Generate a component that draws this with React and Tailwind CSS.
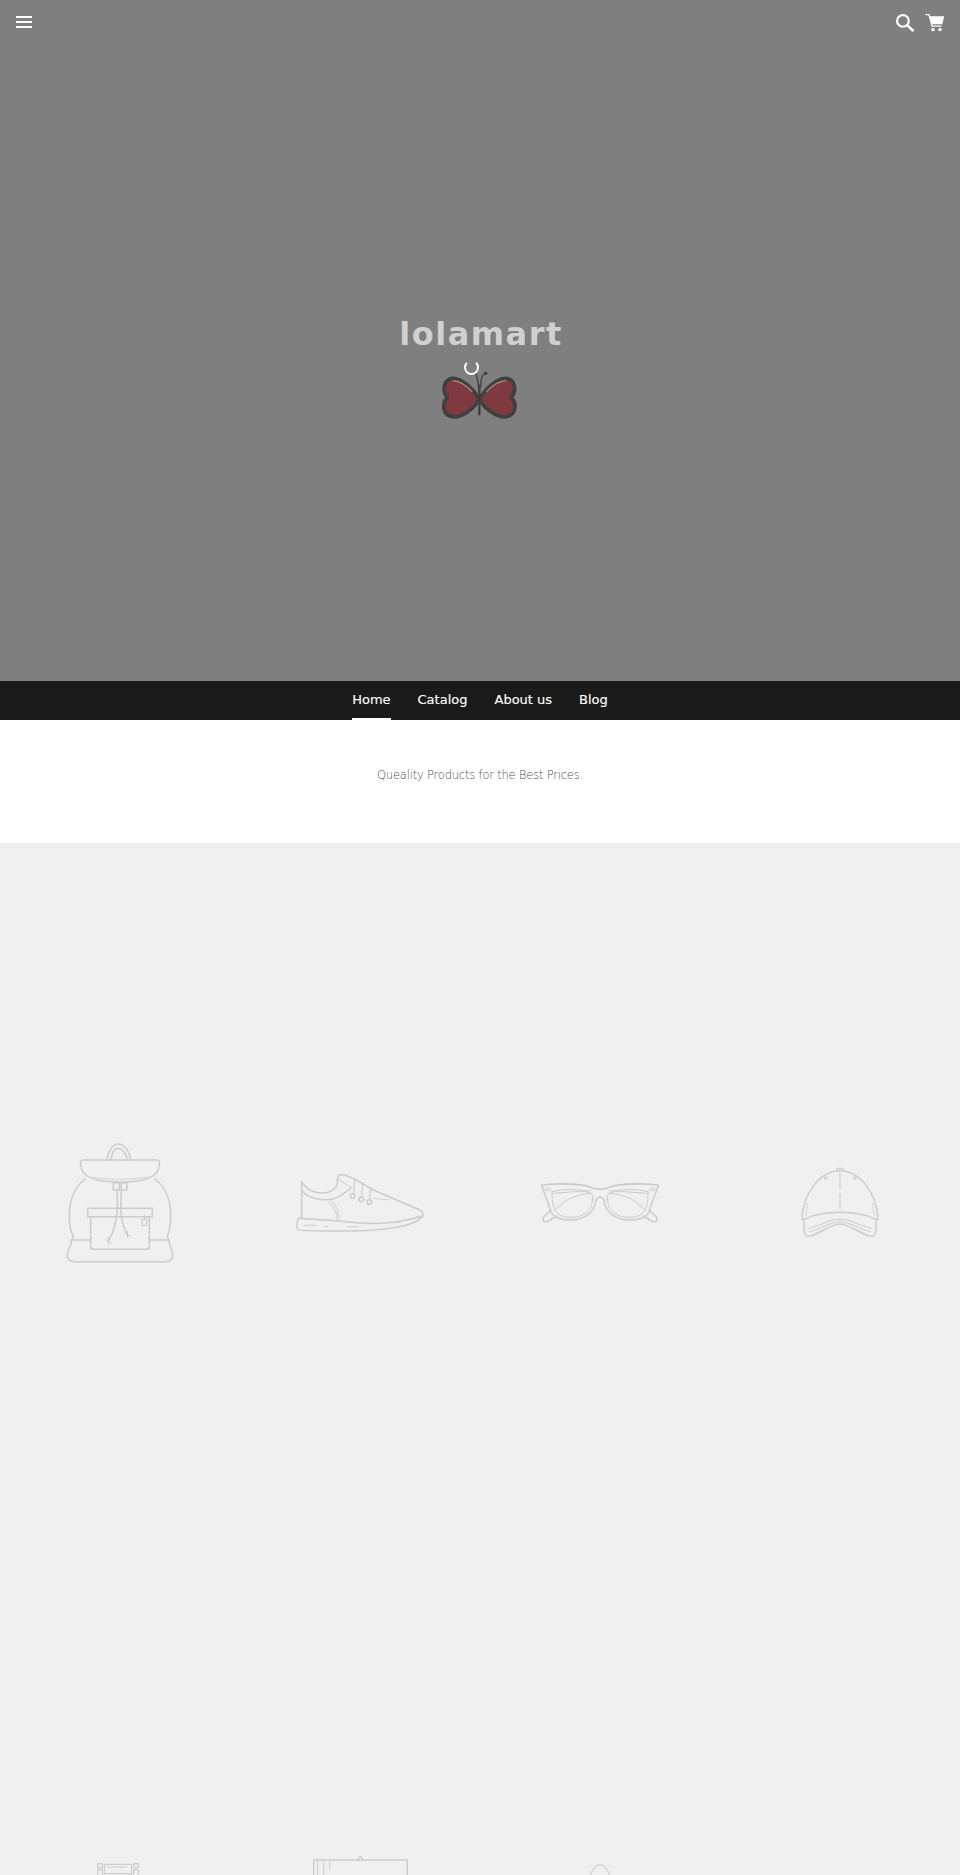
const stroke = "#cccccc";

function Line({ box, w, h, sw = 4.5, children }) {
  return (
    <svg viewBox={box} width={w} height={h} fill="none" stroke={stroke} strokeWidth={sw} strokeLinecap="round" strokeLinejoin="round">
      {children}
    </svg>
  );
}

function Backpack() {
  return (
    <Line box="0 0 480 480" w={160} h={160}>
      <path d="M200 120C205 90 220 72 235 72C250 72 268 90 272 120M212 120C216 98 225 85 235 85C245 85 258 98 262 120" />
      <path d="M128 120H352Q360 120 358 135C355 170 320 186 240 186C160 186 125 170 122 135Q120 120 128 120Z" />
      <path d="M160 172C190 180 290 180 325 170" strokeWidth="2.5" />
      <path d="M135 177C105 200 88 240 88 290C88 315 92 335 100 350L82 400Q80 425 105 425H375Q400 425 398 400L382 350C390 330 392 310 392 285C392 240 375 200 345 177" />
      <path d="M92 360H152M328 360H388" />
      <rect x="220" y="188" width="18" height="22" />
      <rect x="243" y="188" width="18" height="22" />
      <path d="M230 210C235 260 232 320 205 362M245 210C240 260 240 310 262 342" />
      <path d="M197 358L213 368M205 352V372M254 338L270 348M262 334V352" strokeWidth="3" />
      <rect x="143" y="265" width="194" height="25" />
      <path d="M152 290V380Q152 388 160 388H320Q328 388 328 380V290" />
      <rect x="306" y="298" width="14" height="18" strokeWidth="3.5" />
      <path d="M313 285V298" strokeWidth="3.5" />
    </Line>
  );
}

function Shoe() {
  return (
    <Line box="0 0 480 330" w={160} h={110}>
      <path d="M65 95V205M65 95C80 125 120 135 150 125C165 118 175 105 172 85Q175 72 195 75L225 88L280 120L420 180Q432 190 428 200" />
      <path d="M65 122C90 150 150 160 185 135L215 113" />
      <path d="M172 85C190 100 205 105 215 113" strokeWidth="3" />
      <path d="M55 205L180 213C260 225 350 222 428 198C410 225 330 243 200 243C120 243 55 243 52 238Q48 225 55 205Z" />
      <path d="M145 155C162 170 172 190 172 213M155 152C170 170 176 185 178 205" strokeWidth="3" />
      <path d="M72 226H110M132 230H142M200 230H235M330 218H360M392 208L420 198" strokeWidth="3" />
      <circle cx="218" cy="138" r="7" />
      <circle cx="244" cy="148" r="7" />
      <circle cx="268" cy="156" r="7" />
      <path d="M225 85L221 130M248 98L245 140M272 112L269 148" strokeWidth="3.5" />
      <path d="M280 145L330 150" strokeWidth="2.5" />
    </Line>
  );
}

function Glasses() {
  return (
    <Line box="0 0 420 270" w={140} h={90}>
      <path d="M35 75C90 70 160 70 190 85Q210 90 230 85C260 70 330 70 385 75C378 100 365 125 358 155C350 172 330 180 300 180C255 180 225 155 222 120Q210 100 198 120C195 155 165 180 120 180C90 180 70 172 62 155C55 125 42 100 35 75Z" />
      <path d="M66 95C66 130 68 172 120 172C165 172 190 150 188 105C170 85 100 85 66 95Z" strokeWidth="3" />
      <path d="M354 95C354 130 352 172 300 172C255 172 230 150 232 105C250 85 320 85 354 95Z" strokeWidth="3" />
      <path d="M66 100L180 92M354 100L240 92" strokeWidth="3" />
      <path d="M72 152C100 125 125 105 180 100M348 152C320 125 295 105 240 100" strokeWidth="3" />
      <ellipse cx="53" cy="88" rx="8" ry="4" strokeWidth="3" />
      <ellipse cx="367" cy="88" rx="8" ry="4" strokeWidth="3" />
      <path d="M62 150L40 172Q36 188 52 185L80 168M358 150L380 172Q384 188 368 185L340 168" />
    </Line>
  );
}

function Cap() {
  return (
    <Line box="0 0 360 330" w={120} h={110}>
      <path d="M66 205C70 130 120 62 180 62C240 62 290 130 294 205" />
      <path d="M170 62Q172 55 180 55Q188 55 190 62" />
      <path d="M66 205Q64 210 72 208C130 180 230 180 288 208Q296 210 294 205" />
      <path d="M72 208V245Q75 262 92 258C130 245 155 222 180 222C205 222 230 245 268 258Q285 262 288 245V208" />
      <path d="M84 236C125 225 150 208 180 208C210 208 235 225 276 236M88 246C125 235 155 215 180 215C205 215 235 235 272 246" strokeWidth="3" />
      <path d="M180 70V115M180 130V178" strokeWidth="3.5" strokeDasharray="20 5" />
      <circle cx="137" cy="84" r="4" strokeWidth="3" />
      <circle cx="225" cy="84" r="4" strokeWidth="3" />
      <path d="M82 160L78 195M278 160L282 195" strokeWidth="2.5" />
    </Line>
  );
}

function Sofa() {
  return (
    <Line box="0 0 126 378" w={42} h={126} sw={3.5}>
      <rect x="2" y="2" width="14" height="12" />
      <rect x="110" y="2" width="14" height="12" />
      <rect x="2" y="20" width="14" height="60" />
      <rect x="110" y="20" width="14" height="60" />
      <rect x="22" y="4" width="82" height="28" />
      <path d="M30 12H90M22 40H104M22 50H104" />
    </Line>
  );
}

function Frame() {
  return (
    <Line box="0 0 285 414" w={95} h={138} sw={4}>
      <path d="M136 12Q136 3 142 3Q148 3 148 12" />
      <rect x="2" y="12" width="281" height="400" />
      <path d="M14 12V60M32 12V60M50 12V40" strokeWidth="3" />
    </Line>
  );
}

function Bag() {
  return (
    <Line box="0 0 72 372" w={24} h={124} sw={3.5}>
      <path d="M2 60C6 20 22 3 36 3C50 3 66 20 70 60" />
    </Line>
  );
}

function Butterfly() {
  return (
    <svg viewBox="0 0 225 150" width="75" height="50" fill="#7f3a40" stroke="#404040" strokeWidth="11" strokeLinejoin="round" strokeLinecap="round">
      <path d="M112 84C92 52 58 20 32 22C6 24 -2 58 16 80C-2 98 2 128 26 136C54 144 96 116 112 84Z" />
      <path d="M112 84C132 52 166 20 192 22C218 24 226 58 208 80C226 98 222 128 198 136C170 144 128 116 112 84Z" />
      <path d="M112 44V130" strokeWidth="7" fill="none" />
      <path d="M110 48C108 30 106 22 102 8M116 48C116 28 118 10 130 8" strokeWidth="4" fill="none" />
      <circle cx="131" cy="7" r="4.5" fill="#404040" strokeWidth="1" />
      <path d="M32 30C50 28 74 44 90 62M192 30C174 28 150 44 134 62" stroke="#a58f8f" strokeWidth="3.5" fill="none" />
    </svg>
  );
}

export default function App() {
  return (
    <div className="h-[1875px] overflow-hidden bg-[#f0f0f0] font-['DejaVu_Sans',sans-serif]">
      <section className="relative flex h-[681px] flex-col bg-[#7f7f7f]">
        <header className="flex h-[45px] items-start justify-between">
          <button className="mt-[16px] ml-[16px] flex w-[16px] flex-col gap-[3px]">
            <span className="h-[2px] bg-white" />
            <span className="h-[2px] bg-white" />
            <span className="h-[2px] bg-white" />
          </button>
          <div className="mt-[13px] mr-[15px] flex items-start gap-[10px]">
            <svg viewBox="0 0 24 24" width="20" height="20" fill="none" stroke="#ffffff" strokeWidth="2.6" strokeLinecap="round">
              <circle cx="9.5" cy="9.5" r="7" />
              <path d="M14.8 14.8L21.5 21" strokeWidth="3" />
            </svg>
            <svg viewBox="0 0 20 20" width="20" height="20" fill="#ffffff">
              <path d="M0.5 1.6H4L7 13.2H16.6" fill="none" stroke="#ffffff" strokeWidth="1.3" />
              <path d="M4.8 3.2H19.2L17.3 11.2H6.7Z" />
              <circle cx="8" cy="16.6" r="1.7" />
              <circle cx="15" cy="16.6" r="1.7" />
            </svg>
          </div>
        </header>
        <div className="flex flex-col items-center pt-[267px]">
          <h1 className="ml-[2px] text-[32px] leading-[44px] font-bold tracking-[1.5px] text-[#d0d0d0]">lolamart</h1>
          <div className="relative mt-[15px] mr-[1px] h-[50px] w-[75px]">
            <Butterfly />
            <span className="absolute top-[-11px] left-[22px] h-[15px] w-[15px] rounded-full border-2 border-white border-t-transparent" />
          </div>
        </div>
      </section>

      <nav className="flex h-[39px] items-stretch justify-center gap-[27px] bg-[#1a1a1a] text-[13px] font-medium text-white [-webkit-text-stroke:0.15px_#ffffff]">
        <a className="flex items-center border-b-2 border-white">Home</a>
        <a className="flex items-center border-b-2 border-transparent">Catalog</a>
        <a className="flex items-center border-b-2 border-transparent">About us</a>
        <a className="flex items-center border-b-2 border-transparent">Blog</a>
      </nav>

      <section className="flex h-[123px] justify-center bg-white pt-[46px] text-[11.5px] leading-[18px] font-extralight tracking-[-0.2px] text-[#4f4f4f]">
        <p>Queality Products for the Best Prices.</p>
      </section>

      <section className="grid grid-cols-4 auto-rows-[724px]">
        <div className="flex items-center justify-center pb-[10px]"><Backpack /></div>
        <div className="flex items-center justify-center"><Shoe /></div>
        <div className="flex items-center justify-center"><Glasses /></div>
        <div className="flex items-center justify-center"><Cap /></div>
        <div className="flex items-center justify-center pr-[4px] pb-[6px]"><Sofa /></div>
        <div className="flex items-center justify-center pb-[8px]"><Frame /></div>
        <div className="flex items-center justify-center pb-[6px]"><Bag /></div>
        <div />
      </section>
    </div>
  );
}
